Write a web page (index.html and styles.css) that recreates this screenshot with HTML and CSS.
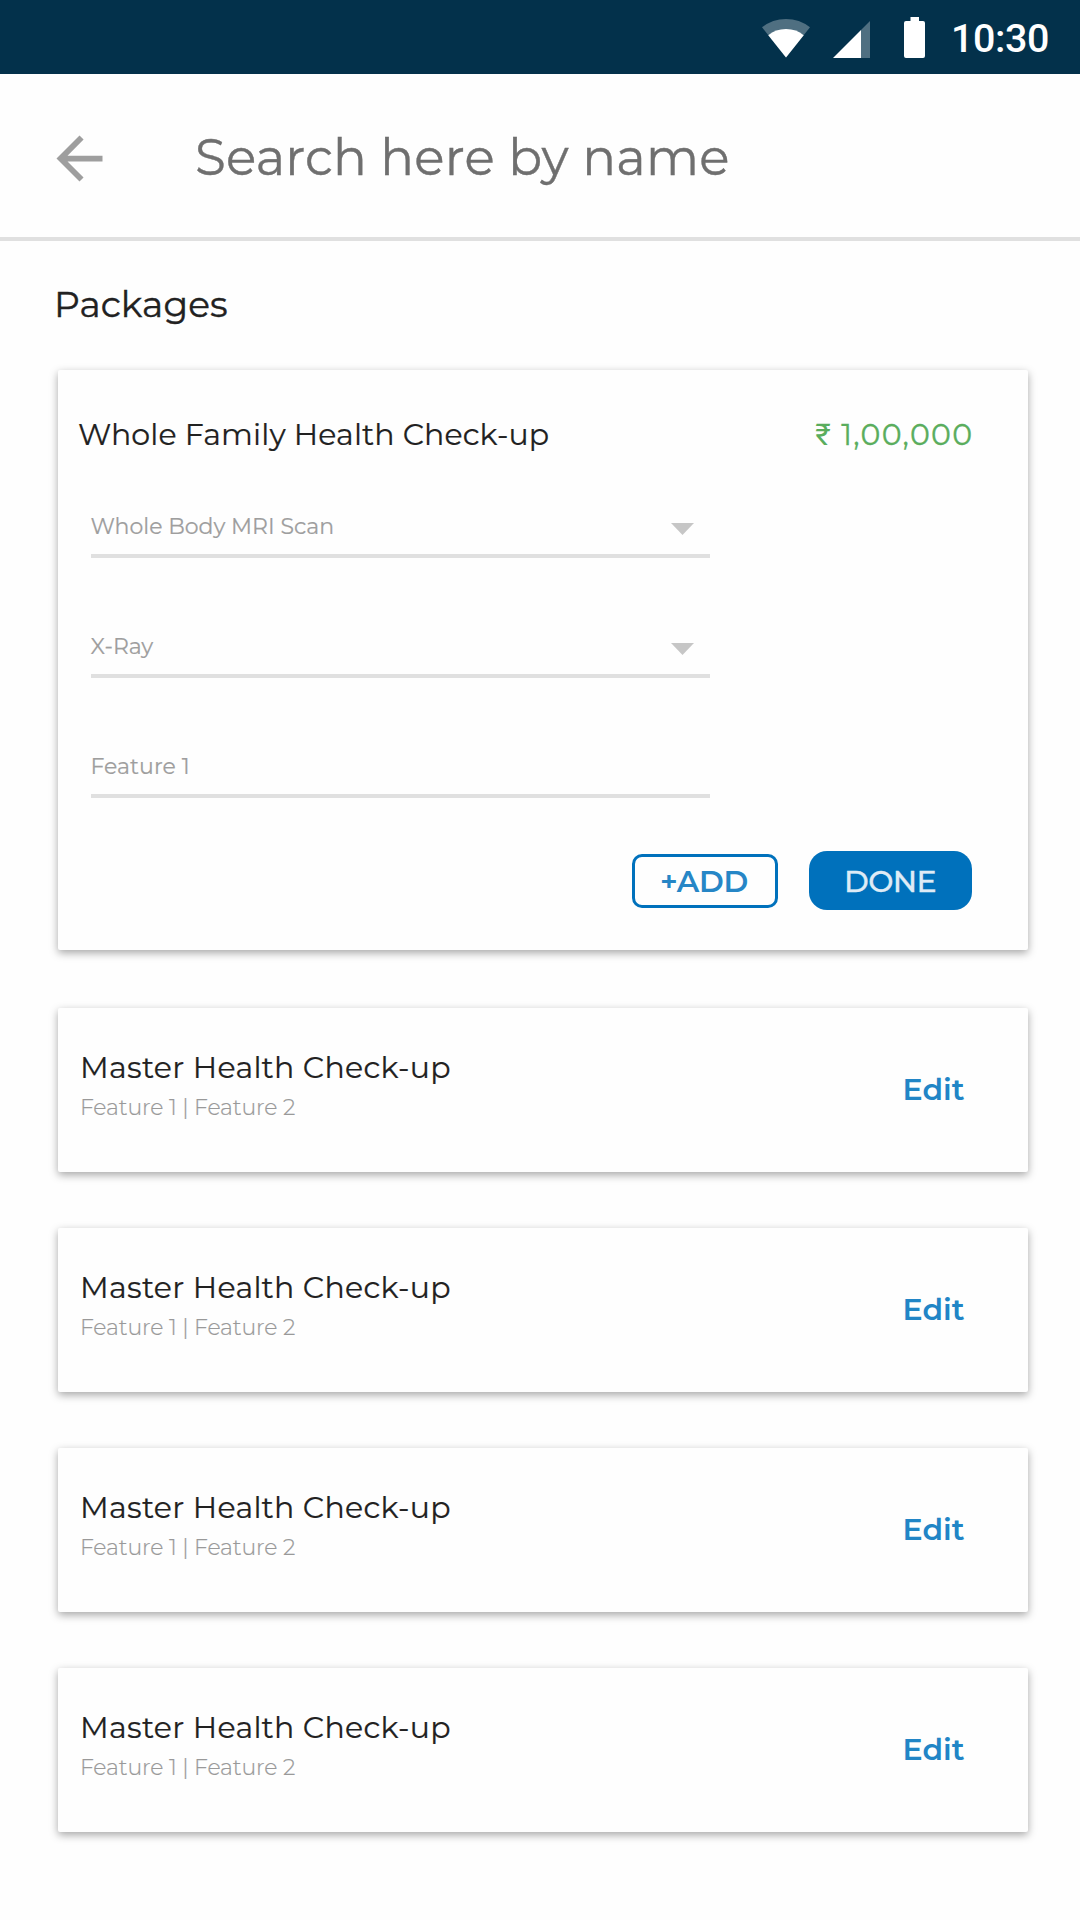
FILE: index.html
```html
<!DOCTYPE html>
<html lang="en">
<head>
  <meta charset="utf-8">
  <title>Packages</title>
  <link rel="stylesheet" href="styles.css">
</head>
<body>
  <div class="statusbar">
    <svg class="wifi" width="50" height="40" viewBox="0 0 50 40">
      <path class="dim" d="M25 39.5 1 9.3Q11.5 1 25 1T49 9.3Z"/>
      <path d="M25 39.5 7.3 17.2Q14.5 11 25 11T42.7 17.2Z"/>
    </svg>
    <svg class="signal" width="37" height="37" viewBox="0 0 37 37">
      <path class="dim" d="M37 0V37H28V9Z"/>
      <path d="M28 9V37H0Z"/>
    </svg>
    <svg class="battery" width="21" height="41" viewBox="0 0 21 41">
      <path d="M6.5 0H15V4H19Q21 4 21 6V39Q21 41 19 41H2Q0 41 0 39V6Q0 4 2 4H6.5Z"/>
    </svg>
    <span class="time">10:30</span>
  </div>

  <header class="searchbar">
    <svg class="back" width="69" height="69" viewBox="0 0 24 24">
      <path d="M20 11H7.83l5.59-5.59L12 4l-8 8 8 8 1.41-1.41L7.83 13H20z"/>
    </svg>
    <span class="placeholder">Search here by name</span>
  </header>

  <main class="content">
    <h1 class="heading">Packages</h1>

    <section class="card open">
      <div class="card-head">
        <h2 class="title wide">Whole Family Health Check-up</h2>
        <span class="price"><span class="rupee">₹</span> 1,00,000</span>
      </div>
      <div class="fields">
        <div class="field">Whole Body MRI Scan<i class="caret"></i></div>
        <div class="field">X-Ray<i class="caret"></i></div>
        <div class="field feature">Feature 1</div>
      </div>
      <div class="actions">
        <button class="btn add">+ADD</button>
        <button class="btn done">DONE</button>
      </div>
    </section>

    <div class="list">
      <section class="card row">
        <div>
          <h2 class="title">Master Health Check-up</h2>
          <p class="sub">Feature 1 | Feature 2</p>
        </div>
        <a class="edit">Edit</a>
      </section>
      <section class="card row">
        <div>
          <h2 class="title">Master Health Check-up</h2>
          <p class="sub">Feature 1 | Feature 2</p>
        </div>
        <a class="edit">Edit</a>
      </section>
      <section class="card row">
        <div>
          <h2 class="title">Master Health Check-up</h2>
          <p class="sub">Feature 1 | Feature 2</p>
        </div>
        <a class="edit">Edit</a>
      </section>
      <section class="card row">
        <div>
          <h2 class="title">Master Health Check-up</h2>
          <p class="sub">Feature 1 | Feature 2</p>
        </div>
        <a class="edit">Edit</a>
      </section>
    </div>
  </main>
</body>
</html>
```
FILE: styles.css
```css
* {
  box-sizing: border-box;
  margin: 0;
  padding: 0;
}

body {
  width: 1080px;
  height: 1920px;
  overflow: hidden;
  background: #fefefe;
  color: #212121;
  font-family: Montserrat, Inter, "Liberation Sans", sans-serif;
  white-space: nowrap;
}

h1,
h2 {
  font-weight: 400;
}

/* Status bar */
.statusbar {
  display: flex;
  justify-content: flex-end;
  align-items: flex-start;
  height: 74px;
  padding: 17px 30px 0 0;
  background: #03314b;
  fill: #fff;
}

.dim {
  fill: #4f6f81;
}

.wifi {
  margin: 1px 22px 0 0;
}

.signal {
  margin: 4px 34px 0 0;
}

.battery {
  margin-right: 26px;
}

.time {
  width: 99px;
  color: #fff;
  font: 500 39.4px/44px Roboto, sans-serif;
  letter-spacing: -0.4px;
}

/* Search header */
.searchbar {
  display: flex;
  height: 167px;
  padding: 50px 0 0 44.5px;
  border-bottom: 4px solid #e0e0e0;
}

.back {
  fill: #9e9e9e;
}

.placeholder {
  margin: 2.5px 0 0 81.5px;
  color: #6f6f6f;
  font-size: 50px;
  line-height: 61px;
  letter-spacing: 0.22px;
  -webkit-text-stroke: 0.4px;
}

/* Packages */
.content {
  padding: 41px 52px 0 58px;
}

.heading {
  margin: 0 0 44px -4px;
  font-size: 36px;
  line-height: 44px;
  letter-spacing: 0.1px;
  -webkit-text-stroke: 0.4px;
}

.card {
  border-radius: 2px;
  background: #fefefe;
  box-shadow: 0 3px 8px rgba(0, 0, 0, 0.35);
}

.open {
  height: 580px;
  padding: 46px 56px 0 20px;
}

.card-head {
  display: flex;
  justify-content: space-between;
  height: 37px;
}

.title {
  font-size: 30px;
  line-height: 37px;
  letter-spacing: 0.31px;
  -webkit-text-stroke: 0.2px;
}

.wide {
  letter-spacing: 0.14px;
}

.price {
  margin-right: -1.4px;
  color: #5aad5d;
  font-size: 30px;
  line-height: 37px;
  letter-spacing: 1.3px;
  -webkit-text-stroke: 0.3px;
}

.rupee {
  font-family: Roboto, sans-serif;
  line-height: 1;
  -webkit-text-stroke: 0;
}

.fields {
  display: grid;
  row-gap: 56px;
  width: 619px;
  margin: 41px 0 0 13px;
}

.field {
  display: flex;
  justify-content: space-between;
  height: 64px;
  padding: 19px 16px 0 0;
  border-bottom: 4px solid #e0e0e0;
  color: #9e9e9e;
  font-size: 22px;
  line-height: 27px;
  text-indent: -0.5px;
  -webkit-text-stroke: 0.2px;
}

.feature {
  letter-spacing: 0.05px;
}

.caret {
  margin-top: 10px;
  width: 23px;
  height: 12px;
  background: #c6c6c6;
  clip-path: polygon(0 0, 100% 0, 50% 100%);
}

.actions {
  display: flex;
  justify-content: flex-end;
  align-items: center;
  gap: 31px;
  margin-top: 53px;
}

.btn {
  font-family: inherit;
  font-size: 30px;
  line-height: 37px;
}

.add {
  width: 146px;
  height: 54px;
  padding: 1px 2px 0 0;
  border: 3px solid #0071bc;
  border-radius: 10px;
  background: #fefefe;
  color: #2686c6;
  font-weight: 600;
  letter-spacing: -0.28px;
}

.done {
  width: 163px;
  height: 59px;
  padding: 2px 1px 0 0;
  border: 0;
  border-radius: 18px;
  background: #0071bc;
  color: #deebf6;
  font-weight: 500;
  letter-spacing: -0.6px;
  -webkit-text-stroke: 0.3px;
}

.list {
  display: grid;
  row-gap: 56px;
  margin-top: 58px;
}

.row {
  display: flex;
  justify-content: space-between;
  height: 164px;
  padding: 41px 63.5px 0 22px;
}

.sub {
  margin-top: 8px;
  color: #999;
  font-size: 22px;
  font-weight: 300;
  line-height: 27px;
  letter-spacing: -0.1px;
  -webkit-text-stroke: 0.2px;
}

.edit {
  margin-top: 22px;
  color: #2185c6;
  font-size: 30px;
  font-weight: 600;
  line-height: 37px;
  letter-spacing: 0;
}
```
